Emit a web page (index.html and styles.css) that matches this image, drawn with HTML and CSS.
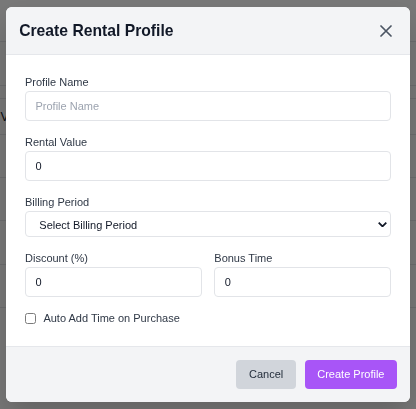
FILE: index.html
```html
<!DOCTYPE html>
<html lang="en">
<head>
<meta charset="utf-8">
<title>Create Rental Profile</title>
<link rel="stylesheet" href="styles.css">
</head>
<body>
<div class="page">
  <div class="page-row row-top"></div>
  <div class="page-row row-2"></div>
  <div class="page-row row-3"></div>
  <div class="page-row row-4"><span class="cell-text">V</span></div>
  <div class="page-row row-5"></div>
  <div class="page-row row-6"></div>
  <div class="page-row row-7"></div>
  <div class="page-row row-8"></div>
</div>

<div class="overlay">
  <div class="modal">
    <div class="modal-header">
      <h2 class="modal-title">Create Rental Profile</h2>
      <button class="close-btn" type="button" aria-label="Close">
        <svg viewBox="0 0 12 12" width="12" height="12" fill="none" stroke="currentColor" stroke-width="1.7" stroke-linecap="round"><path d="M1 1 L11 11 M11 1 L1 11"/></svg>
      </button>
    </div>
    <form class="modal-body">
      <div class="field">
        <label class="field-label">Profile Name</label>
        <input class="field-input" type="text" placeholder="Profile Name">
      </div>
      <div class="field">
        <label class="field-label">Rental Value</label>
        <input class="field-input" type="text" value="0">
      </div>
      <div class="field">
        <label class="field-label">Billing Period</label>
        <div class="select-wrap">
          <select class="field-select">
            <option>Select Billing Period</option>
          </select>
          <svg class="select-chevron" viewBox="0 0 9 5.4" width="9" height="5.4" fill="none" stroke="currentColor" stroke-width="1.8"><polyline points="0.7,0.7 4.5,4.4 8.3,0.7"/></svg>
        </div>
      </div>
      <div class="field-grid">
        <div class="field">
          <label class="field-label">Discount (%)</label>
          <input class="field-input" type="text" value="0">
        </div>
        <div class="field">
          <label class="field-label">Bonus Time</label>
          <input class="field-input" type="text" value="0">
        </div>
      </div>
      <label class="check-row">
        <input class="check" type="checkbox">
        <span>Auto Add Time on Purchase</span>
      </label>
    </form>
    <div class="modal-footer">
      <button class="btn btn-cancel" type="button">Cancel</button>
      <button class="btn btn-primary" type="button">Create Profile</button>
    </div>
  </div>
</div>
</body>
</html>
```
FILE: styles.css
```css
* {
  box-sizing: border-box;
}

html,
body {
  margin: 0;
  height: 100%;
}

body {
  font-family: "Liberation Sans", Arial, sans-serif;
  background: #ffffff;
  overflow: hidden;
}

/* background page (seen through the overlay) */
.page-row {
  border-bottom: 1px solid #e5e7eb;
}

.row-top { height: 42px; }
.row-2 { height: 44px; }
.row-3 { height: 13px; }
.row-4 {
  height: 36px;
  display: flex;
  align-items: center;
  padding-left: 0.5px;
}
.row-5 { height: 43px; }
.row-6 { height: 43px; }
.row-7 { height: 44px; }
.row-8 { height: 43px; }

.cell-text {
  font-size: 12.5px;
  color: #111827;
  padding-top: 1px;
}

/* overlay + modal */
.overlay {
  position: fixed;
  inset: 0;
  background: rgba(0, 0, 0, 0.53);
  display: flex;
  align-items: center;
  justify-content: center;
}

.modal {
  width: 404px;
  background: #ffffff;
  border-radius: 6px;
  overflow: hidden;
  box-shadow: 0 15px 30px rgba(0, 0, 0, 0.18);
}

.modal-header {
  display: flex;
  align-items: center;
  justify-content: space-between;
  background: #f3f4f6;
  border-bottom: 1px solid #e5e7eb;
  padding: 12.5px 18.3px 12.5px 13.2px;
}

.modal-title {
  margin: 0;
  font-size: 15.7px;
  line-height: 21.8px;
  font-weight: 700;
  color: #111827;
}

.close-btn {
  border: 0;
  background: none;
  padding: 0;
  width: 12px;
  height: 12px;
  display: flex;
  color: #4b5563;
  margin-top: 1px;
  cursor: pointer;
}

.modal-body {
  padding: 20px 19px;
}

.field {
  margin-bottom: 14px;
}

.field-label {
  display: block;
  font-size: 11px;
  line-height: 15px;
  color: #2f3846;
  margin-bottom: 1px;
}

.field-input,
.field-select {
  display: block;
  width: 100%;
  height: 30px;
  padding: 0 9.5px;
  border: 1px solid #e2e4e8;
  border-radius: 4px;
  font-family: inherit;
  font-size: 11px;
  color: #111827;
  background: #ffffff;
  outline: none;
}

.field-input::placeholder {
  color: #9ca3af;
}

.select-wrap {
  position: relative;
}

.field-select {
  appearance: none;
  -webkit-appearance: none;
  height: 26px;
  padding: 0 28px 0 13.3px;
  padding-top: 1px;
}

.select-chevron {
  position: absolute;
  right: 4px;
  top: 10.7px;
  color: #111827;
  pointer-events: none;
}

.field-grid {
  display: grid;
  grid-template-columns: 1fr 1fr;
  column-gap: 12.6px;
}

.check-row {
  display: flex;
  align-items: center;
  gap: 7.4px;
  font-size: 11px;
  line-height: 15px;
  color: #2f3846;
}

.check {
  appearance: none;
  -webkit-appearance: none;
  width: 11px;
  height: 11px;
  margin: 0;
  border: 1px solid #7c7c7c;
  border-radius: 2.5px;
  background: #ffffff;
}

.modal-footer {
  display: flex;
  justify-content: flex-end;
  gap: 9px;
  background: #f3f4f6;
  border-top: 1px solid #e5e7eb;
  padding: 13px;
}

.btn {
  height: 28.7px;
  padding: 0 12.5px;
  border: 0;
  border-radius: 4px;
  font-family: inherit;
  font-size: 11px;
  cursor: pointer;
}

.btn-cancel {
  background: #d1d5db;
  color: #1f2937;
}

.btn-primary {
  background: #a855f7;
  color: #ffffff;
}
```
